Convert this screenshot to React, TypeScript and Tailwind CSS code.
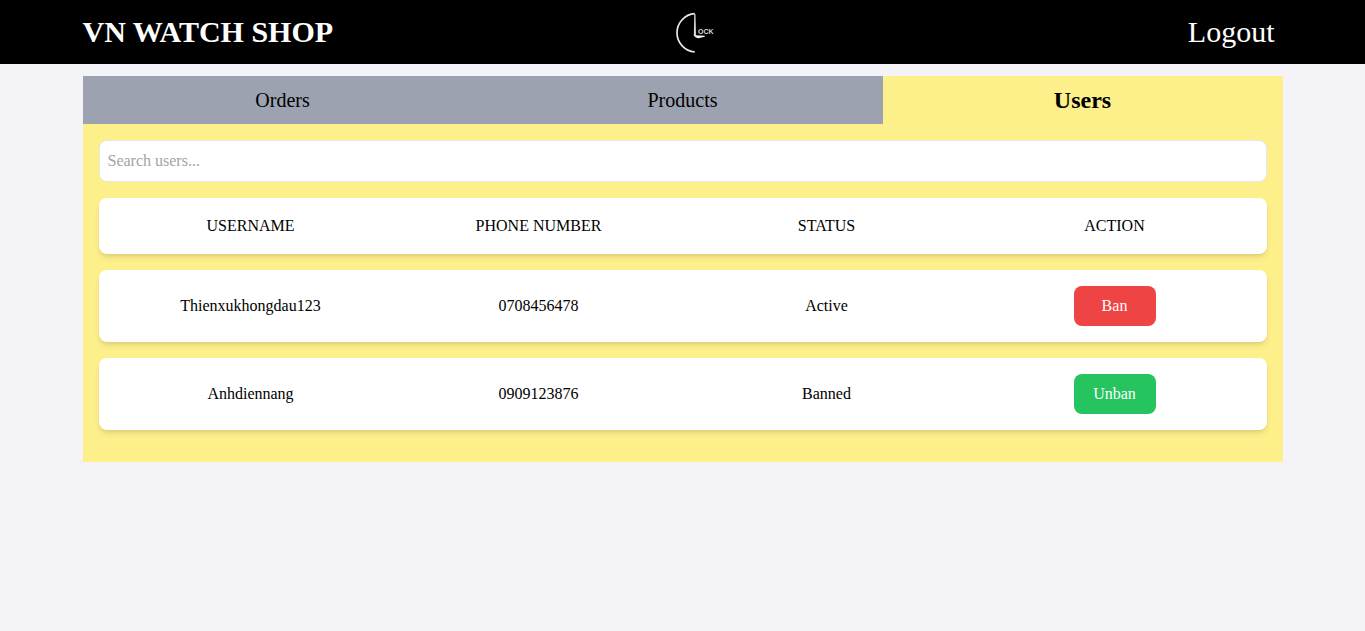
import { useState } from "react";

type User = { name: string; phone: string; banned: boolean };

const initialUsers: User[] = [
  { name: "Thienxukhongdau123", phone: "0708456478", banned: false },
  { name: "Anhdiennang", phone: "0909123876", banned: true },
];

const tabs = ["Orders", "Products", "Users"];

function ClockLogo() {
  return (
    <svg
      viewBox="0 0 64 64"
      className="size-16 overflow-visible"
      role="img"
      aria-label="Clock"
    >
      <path
        d="M43.800 13.700A19.200 19.200 0 0 0 43.800 52"
        fill="none"
        stroke="#e8e8e8"
        strokeWidth="1.7"
      />
      <path d="M43.300 14h1.200l.5 21.500h-2.200z" fill="#d8d8d8" />
      <path d="M42.800 34.500l2 .7 9 .6v.9l-6.500 1.500q-4-.6-4.500-3.700z" fill="#f5f5f5" />
      <text
        x="47"
        y="34"
        fill="#d8d8d8"
        className="font-['Liberation_Sans'] text-[7px] font-bold"
      >
        OCK
      </text>
    </svg>
  );
}

export default function App() {
  const [users, setUsers] = useState(initialUsers);
  const [active, setActive] = useState("Users");
  const [query, setQuery] = useState("");

  const toggle = (name: string) =>
    setUsers(users.map((u) => (u.name === name ? { ...u, banned: !u.banned } : u)));

  const shown = users.filter((u) => u.name.toLowerCase().includes(query.toLowerCase()));

  return (
    <div className="min-h-screen bg-[#f3f3f8] font-['Liberation_Serif',serif] text-base text-black">
      <header className="bg-black text-white">
        <div className="mx-auto grid h-16 max-w-[1200px] grid-cols-3 items-center">
          <h1 className="text-3xl font-bold whitespace-nowrap">VN WATCH SHOP</h1>
          <div className="justify-self-center">
            <ClockLogo />
          </div>
          <button type="button" className="justify-self-end px-2 text-3xl">
            Logout
          </button>
        </div>
      </header>

      <main className="mx-auto mt-3 max-w-[1200px] bg-[#fdef8a]">
        <nav className="grid grid-cols-3">
          {tabs.map((tab) => (
            <button
              key={tab}
              type="button"
              onClick={() => setActive(tab)}
              className={
                tab === active
                  ? "h-12 bg-[#fdef8a] text-2xl font-bold"
                  : "h-12 bg-[#9ca2af] text-xl"
              }
            >
              {tab}
            </button>
          ))}
        </nav>

        <section className="p-4">
          <input
            type="text"
            aria-label="Search users"
            placeholder="Search users..."
            value={query}
            onChange={(e) => setQuery(e.target.value)}
            className="mb-4 block w-full rounded-lg border border-gray-200 bg-white p-2 placeholder:text-[#a3a3a3]"
          />
          <table className="block w-full text-center">
            <thead className="block">
              <tr className="mb-4 grid grid-cols-4 items-center gap-4 rounded-lg bg-white p-4 shadow-md">
                <th className="font-normal">USERNAME</th>
                <th className="font-normal">PHONE NUMBER</th>
                <th className="font-normal">STATUS</th>
                <th className="font-normal">ACTION</th>
              </tr>
            </thead>
            <tbody className="block">
              {shown.map((u) => (
                <tr
                  key={u.name}
                  className="mb-4 grid grid-cols-4 items-center gap-4 rounded-lg bg-white p-4 shadow-md"
                >
                  <td>{u.name}</td>
                  <td>{u.phone}</td>
                  <td>{u.banned ? "Banned" : "Active"}</td>
                  <td>
                    <button
                      type="button"
                      onClick={() => toggle(u.name)}
                      className={
                        u.banned
                          ? "mx-auto block h-10 w-[82px] rounded-lg bg-[#26c45f] text-white"
                          : "mx-auto block h-10 w-[82px] rounded-lg bg-[#ef4444] text-white"
                      }
                    >
                      {u.banned ? "Unban" : "Ban"}
                    </button>
                  </td>
                </tr>
              ))}
            </tbody>
          </table>
        </section>
      </main>
    </div>
  );
}
